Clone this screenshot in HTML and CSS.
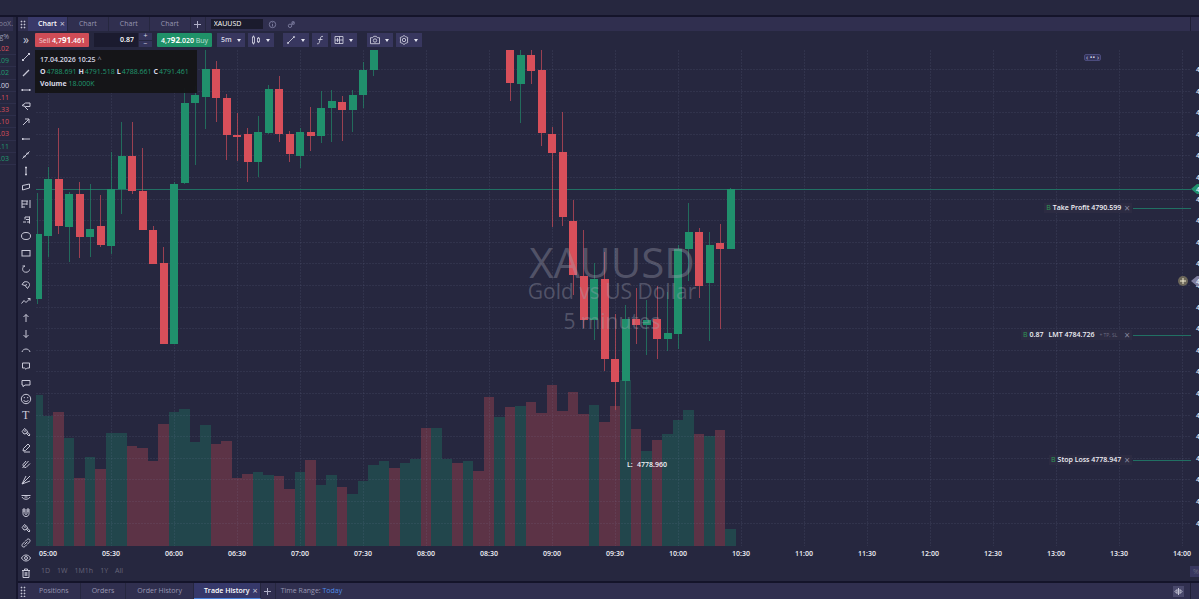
FILE: index.html
```html
<!DOCTYPE html>
<html lang="en">
<head>
    <meta charset="UTF-8">
    <meta name="viewport" content="width=device-width, initial-scale=1.0">
    <title>XAUUSD Chart</title>
    <link rel="stylesheet" href="styles.css">
</head>
<body>

<div class="topbar"></div>

<div class="workspace">
    <div class="watchlist">
        <div class="watch-title">ooX.</div>
        <div class="watch-head">g%</div>
        <ul class="watch-rows">
            <li class="down">.02</li>
            <li class="up">.09</li>
            <li class="up">.02</li>
            <li>.00</li>
            <li class="down">.11</li>
            <li class="down">.33</li>
            <li class="down">.10</li>
            <li class="down">.03</li>
            <li class="up">.11</li>
            <li class="up">.03</li>
        </ul>
    </div>

    <div class="main">
        <div class="tabs">
            <span class="handle"></span>
            <button class="tab active">Chart <span class="close">&times;</span></button>
            <button class="tab">Chart</button>
            <button class="tab">Chart</button>
            <button class="tab">Chart</button>
            <button class="tab-add" aria-label="Add chart"><svg width="9" height="9" viewBox="0 0 9 9"><path d="M4.5 1v7M1 4.5h7"/></svg></button>
            <input class="symbol" type="text" value="XAUUSD" aria-label="Symbol">
            <button class="tab-icon" aria-label="Info"><svg width="9" height="9" viewBox="0 0 9 9"><circle cx="4.5" cy="4.5" r="3.2"/><path d="M4.5 4v2.5M4.5 2.4v.8"/></svg></button>
            <button class="tab-icon" aria-label="Link"><svg width="9" height="9" viewBox="0 0 9 9"><circle cx="3" cy="5.8" r="1.7"/><path d="M4.2 4.6 7 1.8M5 1.8h2.2v2.4H5z"/></svg></button>
            <span class="tabs-end"></span>
        </div>

        <div class="body">
            <div class="sidebar">
                <button class="expand" aria-label="Expand">&raquo;</button>
                <div class="tools" id="tools"></div>
                <div class="tools-bottom" id="tools-bottom"></div>
            </div>

            <div class="content">
                <div class="toolbar">
                    <button class="trade sell"><span class="side">Sell</span> 4,7<span class="big">91</span>.461</button>
                    <div class="amount">
                        <input type="text" value="0.87" aria-label="Amount">
                        <div class="steps">
                            <button aria-label="More">+</button>
                            <button aria-label="Less">&minus;</button>
                        </div>
                    </div>
                    <button class="trade buy">4,7<span class="big">92</span>.020 <span class="side">Buy</span></button>
                    <div class="group">
                        <button class="tool wide">5m <i class="caret"></i></button>
                        <button class="tool" aria-label="Chart type"><svg width="12" height="12" viewBox="0 0 12 12"><path d="M3.5 1.500v1.500M3.500 9v1.500M8.500 3v1.200M8.500 7.800V9"/><rect x="2.500" y="3" width="2" height="6"/><rect x="7.500" y="4.200" width="2" height="3.600"/></svg><i class="caret"></i></button>
                    </div>
                    <div class="group">
                        <button class="tool" aria-label="Drawings"><svg width="12" height="12" viewBox="0 0 12 12"><path d="M3 9 9 3"/><circle cx="3" cy="9" r=".7"/><circle cx="9" cy="3" r=".7"/></svg><i class="caret"></i></button>
                        <button class="tool small" aria-label="Indicators"><svg width="12" height="12" viewBox="0 0 12 12"><path d="M9 2.5c-1.600-.6-2.200.3-2.500 1.500L5.300 8.500C5 9.700 4.300 10.200 3 9.600M4 5.500h4.500"/></svg></button>
                        <button class="tool" aria-label="Layout"><svg width="12" height="12" viewBox="0 0 12 12"><path d="M2 2.500h8v7H2zM6.500 2.500v7M6.500 6h3.500M2 6h4.500M4.500 4v4"/></svg><i class="caret"></i></button>
                    </div>
                    <div class="group last">
                        <button class="tool" aria-label="Snapshot"><svg width="12" height="12" viewBox="0 0 12 12"><path d="M1.500 3.700h2.200l1-1.400h2.600l1 1.400h2.200v6h-9z"/><circle cx="6" cy="6.500" r="1.700"/></svg><i class="caret"></i></button>
                        <button class="tool" aria-label="Settings"><svg width="12" height="12" viewBox="0 0 12 12"><path d="M6 1.500 7.500 2.600 9.700 3.500 9.500 6 9.700 8.500 7.500 9.400 6 10.500 4.500 9.400 2.300 8.500 2.500 6 2.300 3.500 4.500 2.600z"/><circle cx="6" cy="6" r="1.700"/></svg><i class="caret"></i></button>
                    </div>
                </div>

                <div class="chart">
                    <svg class="plot" id="plot"></svg>

                    <div class="legend">
                        <div class="legend-date">17.04.2026 10:25 <span>^</span></div>
                        <div class="legend-prices">
                            <span><b>O</b> <em>4788.691</em></span>
                            <span><b>H</b> <em>4791.518</em></span>
                            <span><b>L</b> <em>4788.661</em></span>
                            <span><b>C</b> <em>4791.461</em></span>
                        </div>
                        <div><b>Volume</b> <em>18.000K</em></div>
                    </div>

                    <div class="pager">&#8249; &bull;&bull; &#8250;</div>

                    <div class="order take-profit">
                        <span class="order-label"><i>B</i><b>Take Profit 4790.599</b><button aria-label="Cancel">&times;</button></span>
                    </div>
                    <div class="order limit">
                        <span class="order-label"><i>B</i><b class="size">0.87</b><b>LMT 4784.726</b><small>+ TP, SL</small><button aria-label="Cancel">&times;</button></span>
                    </div>
                    <div class="order stop-loss">
                        <span class="order-label"><i>B</i><b>Stop Loss 4778.947</b><button aria-label="Cancel">&times;</button></span>
                    </div>
                </div>

                <div class="ranges">
                    <button>1D</button>
                    <button>1W</button>
                    <button>1M1h</button>
                    <button>1Y</button>
                    <button>All</button>
                    <span class="percent">%</span>
                </div>
            </div>
        </div>

        <div class="tabs bottom">
            <span class="handle"></span>
            <button class="tab">Positions</button>
            <button class="tab">Orders</button>
            <button class="tab">Order History</button>
            <button class="tab active">Trade History <span class="close">&times;</span></button>
            <button class="tab-add" aria-label="Add tab"><svg width="9" height="9" viewBox="0 0 9 9"><path d="M4.500 1v7M1 4.500h7"/></svg></button>
            <span class="time-range">Time Range: <a href="#">Today</a></span>
            <button class="columns" aria-label="Columns"><svg width="9" height="9" viewBox="0 0 9 9"><path d="M4.500 1v7M3 2.500 1 4.500l2 2zM6 2.500l2 2-2 2z"/></svg></button>
            <span class="tabs-end"></span>
        </div>
    </div>
</div>

<script src="script.js"></script>
</body>
</html>
```

FILE: styles.css
```css
* {
    box-sizing: border-box;
}
body {
    margin: 0;
    height: 100vh;
    display: flex;
    flex-direction: column;
    overflow: hidden;
    background-color: #26273f;
    color: #d9d9e6;
    font-family: "Open Sans", "Noto Sans", sans-serif;
    font-size: 7px;
    line-height: 12px;
}
button,
input {
    font: inherit;
    color: inherit;
    border: 0;
    padding: 0;
    margin: 0;
    background: none;
}
svg {
    display: block;
    flex: none;
    fill: none;
    stroke: currentColor;
}
.topbar {
    flex: none;
    height: 17px;
    border-bottom: 2px solid #14142a;
}
.workspace {
    flex: 1;
    display: flex;
    min-height: 0;
}

/* watchlist */
.watchlist {
    flex: none;
    width: 18px;
    border-right: 2px solid #17172e;
    overflow: hidden;
}
.watch-title {
    height: 14px;
    line-height: 14px;
    background-color: #302f4f;
    color: #83839c;
    width: 13px;
    display: flex;
    justify-content: flex-end;
}
.watch-head {
    width: 9px;
    display: flex;
    justify-content: flex-end;
    color: #9c9cb4;
}
.watch-rows {
    list-style-type: none;
    margin: 0;
    padding: 0;
    height: 122px;
    display: flex;
    flex-direction: column;
}
.watch-rows li {
    flex: 1;
    min-height: 0;
    display: flex;
    justify-content: flex-end;
    padding-right: 7px;
    border-bottom: 1px solid #2e2f4b;
}
.watch-rows .up {
    color: #219a70;
}
.watch-rows .down {
    color: #d84f5a;
}

/* tab bars */
.main {
    flex: 1;
    min-width: 0;
    display: flex;
    flex-direction: column;
}
.tabs {
    flex: none;
    height: 14px;
    display: flex;
    align-items: stretch;
    background-color: #302f4f;
    color: #9897b2;
}
.handle {
    width: 10px;
    background-image: radial-gradient(circle, #c5c5d6 40%, transparent 50%);
    background-size: 3px 3px;
    background-clip: content-box;
    background-origin: content-box;
    padding: 3px 2px 2px;
}
.tab {
    padding: 0 11px;
    border-right: 1px solid #26273f;
    white-space: nowrap;
}
.tab.active {
    display: flex;
    align-items: center;
    color: #fff;
    font-weight: 600;
    background-color: #39396a;
    padding: 0 2px 0 10px;
}
.close {
    margin-left: 3px;
    font-size: 9px;
    font-weight: 400;
    color: #c5c5d6;
}
.tab-add {
    display: flex;
    align-items: center;
    justify-content: center;
    width: 15px;
    border-right: 1px solid #26273f;
    color: #b0b0c8;
}
.symbol {
    width: 52px;
    margin: 2px 0 2px 5px;
    padding: 0 3px;
    background-color: #1b1b2d;
    color: #fff;
}
.tab-icon {
    display: flex;
    align-items: center;
    margin: 0 5px;
    color: #77779a;
}
.tabs-end {
    width: 9px;
    margin-left: auto;
    border-left: 1px solid #1f1f36;
}
.bottom {
    height: 18px;
    border-top: 2px solid #14142a;
}
.bottom .tab.active {
    background-color: #36386a;
    border-bottom: 1px solid #4a7fd6;
}
.time-range {
    padding-left: 5px;
    line-height: 16px;
}
.time-range a {
    color: #4f8be8;
    text-decoration: none;
}
.columns {
    width: 11px;
    margin: 3px 6px 2px auto;
    display: flex;
    align-items: center;
    justify-content: center;
    background-color: #4a496c;
    color: #c5c5d6;
}
.columns + .tabs-end {
    margin-left: 0;
}

/* drawing tools */
.body {
    flex: 1;
    display: flex;
    min-height: 0;
}
.sidebar {
    flex: none;
    width: 17px;
    padding-right: 1px;
    display: flex;
    flex-direction: column;
    color: #c9c9d8;
}
.expand {
    height: 18px;
    font-size: 12px;
    line-height: 14px;
}
.tools {
    flex: 1;
    display: flex;
    flex-direction: column;
}
.tools button {
    flex: 1;
}
.tools-bottom {
    padding-bottom: 1px;
}
.tools-bottom button {
    height: 15px;
}
.tools button,
.tools-bottom button {
    width: 100%;
    display: flex;
    align-items: center;
    justify-content: center;
}

/* toolbar */
.content {
    flex: 1;
    min-width: 0;
    display: flex;
    flex-direction: column;
}
.toolbar {
    flex: none;
    height: 18px;
    padding: 2px 0;
    display: flex;
    gap: 5px;
}
.trade {
    width: 54px;
    color: #fff;
    font-weight: 600;
    white-space: nowrap;
    border-radius: 1px;
}
.trade .big {
    font-size: 8px;
    font-weight: 700;
}
.trade .side {
    font-weight: 400;
    opacity: 0.7;
}
.sell {
    background-color: #cf4c56;
}
.buy {
    width: 55px;
    background-color: #1f9168;
}
.amount {
    display: flex;
    width: 58px;
    gap: 1px;
}
.amount input {
    width: 44px;
    padding-right: 4px;
    text-align: right;
    background-color: #1b1b2f;
    color: #fff;
    font-weight: 600;
}
.steps {
    flex: 1;
    display: flex;
    flex-direction: column;
    gap: 1px;
}
.steps button {
    flex: 1;
    line-height: 6px;
    background-color: #34345a;
}
.group {
    display: flex;
    gap: 3px;
    margin-right: 4px;
}
.group.last {
    margin-left: 1px;
}
.tool {
    width: 26px;
    display: flex;
    align-items: center;
    justify-content: space-between;
    padding: 0 4px 0 2px;
    background-color: #38375f;
    font-weight: 600;
}
.tool svg {
    stroke-width: 0.8;
}
.tool.wide {
    width: 28px;
    padding-left: 4px;
}
.tool.small {
    width: 16px;
    padding: 0 2px;
}
.caret {
    border: 2px solid transparent;
    border-top: 3px solid #e5e5f0;
    border-bottom: 0;
}

/* chart */
.chart {
    flex: 1;
    min-height: 0;
    position: relative;
    overflow: hidden;
}
.plot {
    width: 100%;
    height: 100%;
}
.plot text {
    stroke: none;
    fill: #f0f0f6;
    font-weight: 600;
}
.plot .watermark text {
    fill: #a5a5b5;
    fill-opacity: 0.36;
    font-weight: 400;
    text-anchor: middle;
    font-size: 21px;
}
.plot .watermark .name {
    font-size: 42px;
}
.grid path {
    stroke: #8fa0c0;
    stroke-opacity: 0.1;
    stroke-dasharray: 2 1;
}
.legend {
    position: absolute;
    left: 0;
    top: 1px;
    width: 162px;
    height: 43px;
    padding: 4px 5px;
    background-color: rgba(20, 20, 22, 0.95);
    white-space: nowrap;
}
.legend-date {
    font-weight: 600;
}
.legend-date span {
    color: #77778a;
}
.legend-prices {
    display: flex;
    gap: 2px;
}
.legend-prices span {
    display: flex;
    gap: 1px;
}
.legend b {
    font-weight: 700;
}
.legend em {
    font-style: normal;
    color: #219a70;
}
.pager {
    position: absolute;
    right: 98px;
    top: 5px;
    width: 17px;
    height: 7px;
    line-height: 6px;
    text-align: center;
    border: 1px solid #4b4b7c;
    border-radius: 2px;
    background-color: #33335a;
}
.order {
    position: absolute;
    right: 8px;
    display: flex;
    align-items: center;
}
.order::after {
    content: "";
    width: 58px;
    height: 1px;
    background-color: #217063;
}
.order-label {
    display: flex;
    align-items: center;
    height: 10px;
    padding: 0 2px;
    margin-right: 1px;
    background-color: #2c2b42;
    white-space: nowrap;
}
.order b {
    font-weight: 600;
    color: #f0f0f6;
}
.order .size {
    margin-right: 5px;
}
.order i {
    font-style: normal;
    color: #2f9a54;
    margin-right: 2px;
}
.order small {
    font-size: 5px;
    color: #6a6a80;
    margin: 0 4px 0 5px;
}
.order button {
    font-size: 10px;
    color: #85859a;
    margin-left: 3px;
}
.take-profit {
    top: 154px;
}
.limit {
    top: 281px;
}
.stop-loss {
    top: 406px;
}
.ranges {
    flex: none;
    height: 20px;
    display: flex;
    align-items: center;
    gap: 7px;
    padding-left: 6px;
    color: #66667a;
}
.percent {
    width: 9px;
    margin-left: auto;
    padding-left: 3px;
    height: 11px;
    background-color: #38375f;
    overflow: hidden;
}
```

FILE: script.js
```js
var NS = "http://www.w3.org/2000/svg";

// origin of the plot inside the window
var LEFT = 35;
var TOP = 49;
var STEP = 10.5;
var FIRST = 48;
var FLOOR = 546;

// [index, colour, body top, body bottom, high, low]
var candles = [
    [-1, "g", 234, 299, 193, 304], [0, "g", 179, 236, 167, 257], [1, "r", 179, 226, 128, 234],
    [2, "g", 194, 227, 192, 262], [3, "r", 194, 237, 182, 258], [4, "g", 229, 237, 184, 257],
    [5, "r", 226, 245, 195, 247], [6, "g", 189, 246, 152, 254], [7, "g", 156, 189, 122, 214],
    [8, "r", 156, 191, 122, 194], [9, "r", 191, 230, 148, 230], [10, "r", 230, 264, 226, 264],
    [11, "r", 263, 344, 247, 344], [12, "g", 184, 344, 182, 344], [13, "g", 103, 183, 88, 184],
    [14, "g", 95, 103, 86, 165], [15, "g", 69, 97, 50, 129], [16, "r", 69, 98, 61, 122],
    [17, "r", 98, 135, 94, 160], [18, "r", 135, 137, 113, 161], [19, "r", 134, 162, 128, 182],
    [20, "g", 132, 162, 116, 177], [21, "g", 89, 133, 85, 134], [22, "r", 89, 134, 76, 142],
    [23, "r", 134, 154, 131, 162], [24, "g", 132, 156, 128, 168], [25, "r", 132, 136, 107, 151],
    [26, "g", 108, 136, 91, 143], [27, "g", 101, 108, 90, 142], [28, "r", 102, 110, 96, 141],
    [29, "g", 95, 110, 90, 132], [30, "g", 70, 95, 62, 108], [31, "g", 50, 70, 50, 76],
    [44, "r", 50, 83, 50, 101], [45, "g", 55, 84, 50, 123], [46, "r", 55, 71, 50, 84],
    [47, "r", 70, 133, 50, 146], [48, "r", 134, 153, 127, 227], [49, "r", 152, 217, 112, 226],
    [50, "r", 221, 275, 200, 295], [51, "r", 276, 320, 230, 328], [52, "g", 279, 320, 263, 340],
    [53, "r", 279, 359, 252, 371], [54, "r", 359, 382, 314, 410], [55, "g", 319, 381, 305, 460],
    [56, "r", 319, 325, 288, 344], [57, "g", 320, 325, 300, 355], [58, "r", 319, 339, 286, 359],
    [59, "g", 333, 339, 292, 351], [60, "g", 249, 334, 245, 349], [61, "g", 232, 249, 203, 281],
    [62, "r", 232, 286, 228, 298], [63, "g", 245, 283, 232, 341], [64, "r", 243, 249, 224, 329],
    [65, "g", 189, 249, 188, 249]
];

// volume bar tops, starting one bar before 05:00
var volume = "g395 g416 r412 g438 r478 g457 r469 g433 g433 r446 r448 r461 r424 g412 g409 g442 g425 " +
    "r444 r441 r478 r474 g472 g475 r476 r489 g472 r460 g485 g475 r487 g494 g481 g465 g461 r468 g463 g459 " +
    "r428 g428 g459 r463 g461 r471 r397 g417 r407 g406 r402 r413 r385 r411 r392 r414 g405 r422 r406 g380 " +
    "r429 g451 r440 g434 g420 g410 r434 g436 r430 g529";

var colors = { g: "#20906c", r: "#d84f5a" };
var volumeColors = { g: "#22464c", r: "#5c3346" };

function add(parent, tag, attrs, text) {
    var el = document.createElementNS(NS, tag);
    for (var key in attrs) {
        el.setAttribute(key, attrs[key]);
    }
    if (text) {
        el.textContent = text;
    }
    parent.appendChild(el);
    return el;
}

function drawChart() {
    var plot = document.getElementById("plot");
    plot.innerHTML = "";
    var right = plot.clientWidth + LEFT;
    var g = add(plot, "g", { transform: "translate(" + -LEFT + " " + -TOP + ")" });
    var x, y, i;

    volume.split(" ").forEach(function (bar, n) {
        var top = Number(bar.slice(1));
        var left = Math.round(FIRST + (n - 1) * STEP - STEP / 2);
        var end = Math.round(FIRST + n * STEP - STEP / 2);
        left = Math.max(left, 36);
        add(g, "rect", { x: left, y: top, width: end - left, height: FLOOR - top, fill: volumeColors[bar[0]], stroke: "none" });
    });

    var grid = add(g, "g", { "class": "grid" });
    for (i = 0; i < 22; i++) {
        y = Math.round(69 + i * 21.6) + 0.5;
        add(grid, "path", { d: "M36 " + y + "H" + (right - 9) });
        add(g, "text", { x: right - 3, y: y + 2 }, "4");
    }
    for (i = 0, x = FIRST; x < right; i++, x += 63) {
        add(grid, "path", { d: "M" + (x + 0.5) + " 50V" + FLOOR });
        var minutes = 300 + i * 30;
        var label = ("0" + Math.floor(minutes / 60)).slice(-2) + ":" + (minutes % 60 ? "30" : "00");
        add(g, "text", { x: x, y: 556, "text-anchor": "middle" }, label);
    }

    add(g, "rect", { x: 36, y: 189, width: right - 44, height: 1, fill: "#217063", stroke: "none" });

    candles.forEach(function (c) {
        var cx = FIRST + c[0] * STEP;
        var from = Math.max(Math.round(cx - 4), 36);
        add(g, "rect", { x: Math.floor(cx), y: c[4], width: 1, height: c[5] - c[4], fill: colors[c[1]], "fill-opacity": 0.65, stroke: "none" });
        add(g, "rect", { x: from, y: c[2], width: Math.round(cx + 4) - from, height: c[3] - c[2], fill: colors[c[1]], stroke: "none" });
    });

    var mark = add(g, "g", { "class": "watermark" });
    var middle = Math.round((right + 25) / 2);
    add(mark, "text", { x: middle, y: 278, "class": "name" }, "XAUUSD");
    add(mark, "text", { x: middle, y: 299 }, "Gold vs US Dollar");
    add(mark, "text", { x: middle, y: 329 }, "5 minutes");

    add(g, "text", { x: 627, y: 467 }, "L:");
    add(g, "text", { x: 637, y: 467 }, "4778.960");

    // current price and cursor price on the axis
    add(g, "path", { d: "M" + (right - 8) + " 189l6-5h3v10h-3z", fill: "#20906c", stroke: "none" });
    add(g, "path", { d: "M" + (right - 8) + " 281l6-5h3v10h-3z", fill: "#8080a0", stroke: "none" });
    add(g, "text", { x: right - 3, y: 192 }, "4");
    add(g, "text", { x: right - 3, y: 284 }, "4");
    add(g, "circle", { cx: right - 16, cy: 281, r: 5, fill: "#6b6659", stroke: "none" });
    add(g, "path", { d: "M" + (right - 19) + " 281h6m-3-3v6", stroke: "#f0ead0" });
}

var icons = [
    ["Segment", '<path d="M3 9 9 3"/><path d="M2 9h2M8 3h2" stroke-width="2"/>'],
    ["Line", '<path d="M3 9 9 3M4.500 7.500l3-3" stroke-width="1.300"/>'],
    ["Horizontal segment", '<path d="M2 6h8"/><path d="M1.500 6h1.500M9 6h1.500" stroke-width="2"/>'],
    ["Callout", '<path d="M2 5.500 5.500 3H10v3.500H5.500L2 5.500M4.500 6.500 8 10"/>'],
    ["Arrow", '<path d="M3 9 9 3M5 3h4v4"/>'],
    ["Horizontal line", '<path d="M2 6h8"/><path d="M2 6h1.500" stroke-width="2"/>'],
    ["Extended line", '<path d="M2.500 9.500l7-7"/><path d="M3.500 7.500h2M6.500 4.500h2" stroke-width="1.600"/>'],
    ["Vertical line", '<path d="M6 2v8"/><path d="M5 2.500h2M5 9.500h2" stroke-width="1.500"/>'],
    ["Channel", '<path d="M2.500 4.500 9.500 3v4L2.500 9z"/>'],
    ["Fibonacci", '<path d="M2 2v8M2 3h6M2 6h5M2 9h3M7 3v4M10 2v8"/>'],
    ["Fibonacci extension", '<path d="M9.500 2.500v7M5 3h4.500M6 5.500h3.500M7 8h2.500M3 8h3M5 3v2.500"/>'],
    ["Ellipse", '<ellipse cx="6" cy="6" rx="4.500" ry="3.500"/>'],
    ["Rectangle", '<rect x="2" y="3.500" width="8" height="5.500"/>'],
    ["Curve", '<path d="M5 3C1.500 4 2 9 5.500 9.200 8 9.500 9.500 8 9.500 6.500M2.500 3H5"/>'],
    ["Lasso", '<path d="M2 5.500 4 3c3-1 6 .5 5.500 3.500L7.500 9.500 5 6.500zM5 6.500l2-1"/>'],
    ["Path", '<path d="M1.500 8.500 4 5.500 6 7.500l4-4M7.800 3.500H10v2.200"/>'],
    ["Arrow up", '<path d="M6 10V2.500M3.500 5 6 2.500 8.500 5"/>'],
    ["Arrow down", '<path d="M6 2v7.500M3.500 7 6 9.500 8.500 7"/>'],
    ["Arc", '<path d="M2 8c1-4 7-4 8 0"/>'],
    ["Note", '<path d="M2.500 3h7v5H7.300L6 9.300 4.700 8H2.500z"/>'],
    ["Comment", '<path d="M2 3.500h8V8H5L3 9.700V8H2z"/>'],
    ["Emoji", '<circle cx="6" cy="6" r="4.700"/><path d="M3.500 7c1 2 4 2 5 0M4.300 4v1.200M7.700 4v1.200"/>'],
    ["Text", '<text x="2" y="10" font-size="12" font-family="Liberation Serif" fill="currentColor" stroke="none">T</text>'],
    ["Brush", '<path d="M2.200 5.500 4.500 2.500l3 2.500-1 2.500-2.500.5zM4 5h2M6.500 7.500l1.500-1 2 2.500-1 1z"/>'],
    ["Pencil", '<path d="M3 9l.5-2.500L8 2l2 2-4.500 4.500zM4 10h6"/>'],
    ["Pitchfork", '<path d="M2.500 10 8.500 3M3 6.500l3-3.500M6 9.500l4-4M3 6.500c0 2 1 3 3 3"/>'],
    ["Fan", '<path d="M2 10 6 2M2 10l8-8M2 10l8-3"/>'],
    ["Hidden", '<path d="M1.500 4.500h9M2 6c1.500 3 6.500 3 8 0M4.500 6h3"/>']
];
var bottomIcons = [
    ["Magnet", '<path d="M3 2v4.500c0 4 6 4 6 0V2H7v4.500c0 1.300-2 1.300-2 0V2zM3 4h2M7 4h2"/>'],
    ["Lock drawings", '<path d="M2.200 5.500 4.500 2.500l3 2.500-1 2.500-2.500.5zM4 5h2M6.500 7.500l1.500-1 2 2.500-1 1z"/>'],
    ["Sync", '<path d="M5 4.500 7 2.500c2-1.500 4 .500 2.500 2.500l-2 2M7 7.500l-2 2c-2 1.500-4-.500-2.500-2.500l2-2M4.500 7.500l3-3"/>'],
    ["Show", '<path d="M1.500 6c2-4 7-4 9 0-2 4-7 4-9 0z"/><circle cx="6" cy="6" r="1.500"/>'],
    ["Delete", '<path d="M2 3.500h8M4.500 3.500V2h3v1.500M3 3.500v7h6v-7M5.200 5v4M6.800 5v4"/>']
];

function fillTools(id, list) {
    document.getElementById(id).innerHTML = list.map(function (icon) {
        return '<button aria-label="' + icon[0] + '"><svg width="12" height="12" viewBox="0 0 12 12">' + icon[1] + '</svg></button>';
    }).join("");
}

fillTools("tools", icons);
fillTools("tools-bottom", bottomIcons);
drawChart();
window.addEventListener("resize", drawChart);
```
